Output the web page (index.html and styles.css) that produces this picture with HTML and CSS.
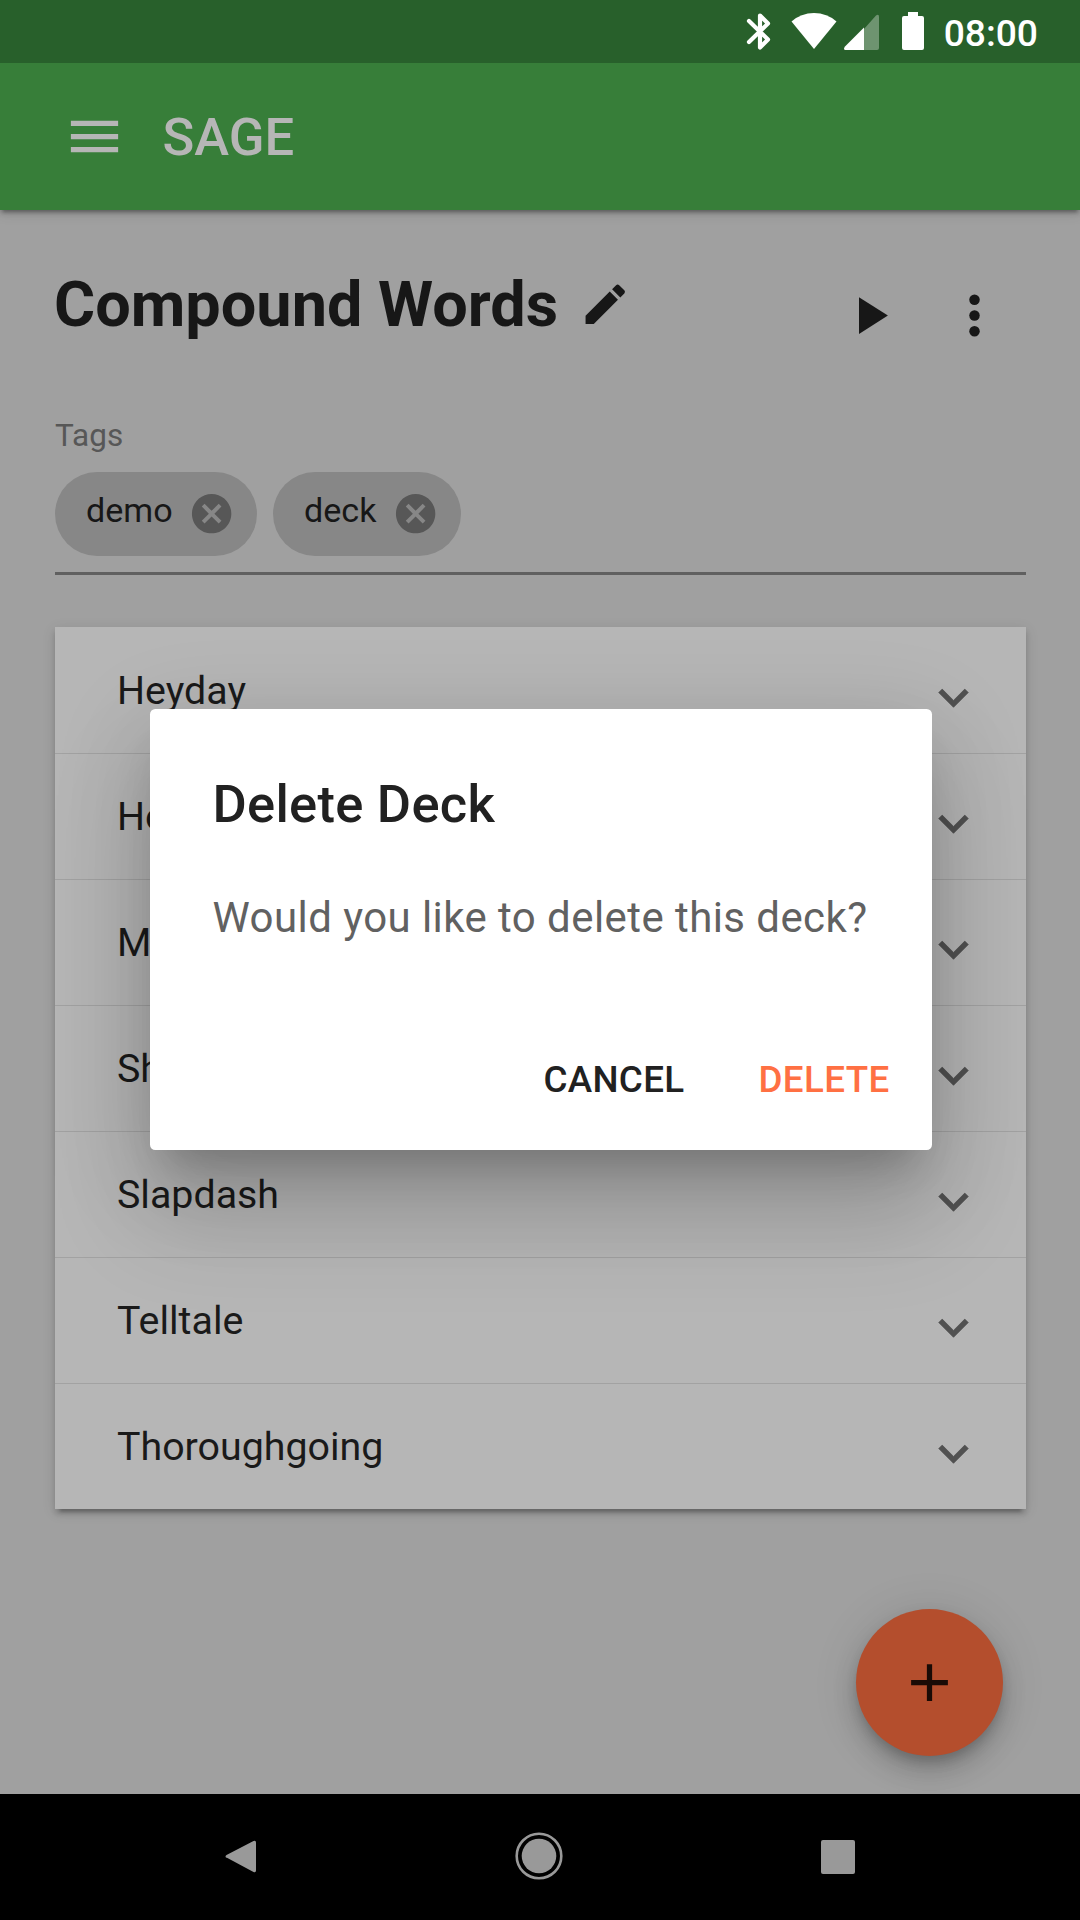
FILE: index.html
```html
<!DOCTYPE html>
<html lang="en">
<head>
<meta charset="utf-8">
<title>Sage</title>
<link rel="stylesheet" href="styles.css">
</head>
<body>
<div class="screen">
  <div class="status-bar">
    <svg class="status-icons" width="190" height="63" viewBox="740 0 190 63">
      <path d="M749 21 L768 39.5 L760 47.5 V15.500 L768 23.500 L749 42" fill="none" stroke="#fff" stroke-width="4.200" stroke-linecap="round" stroke-linejoin="round"/>
      <path d="M814 49 L791.500 21.500 Q801 13 814 13 Q827 13 836.500 21.500 Z" fill="#fff"/>
      <path d="M864 29 L876 15.500 Q879 13.500 879 17 V48 Q879 50 877 50 H864 Z" fill="#fff" fill-opacity=".33"/>
      <path d="M864 27.500 V50 H845 Q843 49 845 46.500 Z" fill="#fff"/>
      <path d="M908 12 H918 V16 H922 Q924 16 924 18 V48 Q924 50 922 50 H904 Q902 50 902 48 V18 Q902 16 904 16 H908 Z" fill="#fff"/>
    </svg>
    <span class="clock">08:00</span>
  </div>

  <header class="app-bar">
    <svg class="icon" viewBox="0 0 24 24"><path d="M3 18h18v-2H3v2zm0-5h18v-2H3v2zm0-7v2h18V6H3z"/></svg>
    <span class="brand">SAGE</span>
  </header>

  <main class="content">
    <div class="deck-header">
      <div class="deck-title">
        <h1>Compound Words</h1>
        <svg class="icon-edit" viewBox="0 0 24 24"><path d="M3 17.25V21h3.750L17.810 9.940l-3.750-3.750L3 17.250zM20.710 7.040c.39-.39.39-1.020 0-1.410l-2.340-2.340a.996.996 0 0 0-1.410 0l-1.830 1.830 3.750 3.750 1.830-1.830z"/></svg>
      </div>
      <div class="deck-actions">
        <svg class="icon" viewBox="0 0 24 24"><path d="M8 5v14l11-7z"/></svg>
        <svg class="icon" viewBox="0 0 24 24"><circle cx="12" cy="6" r="2"/><circle cx="12" cy="12" r="2"/><circle cx="12" cy="18" r="2"/></svg>
      </div>
    </div>

    <section class="tags">
      <div class="tags-label">Tags</div>
      <div class="chips">
        <div class="chip"><span>demo</span><svg class="icon-cancel" viewBox="0 0 24 24"><path d="M12 2C6.470 2 2 6.470 2 12s4.470 10 10 10 10-4.470 10-10S17.530 2 12 2zm5 13.590L15.590 17 12 13.410 8.410 17 7 15.590 10.590 12 7 8.410 8.410 7 12 10.590 15.590 7 17 8.410 13.410 12 17 15.590z"/></svg></div>
        <div class="chip"><span>deck</span><svg class="icon-cancel" viewBox="0 0 24 24"><path d="M12 2C6.470 2 2 6.470 2 12s4.470 10 10 10 10-4.470 10-10S17.530 2 12 2zm5 13.590L15.590 17 12 13.410 8.410 17 7 15.590 10.590 12 7 8.410 8.410 7 12 10.590 15.590 7 17 8.410 13.410 12 17 15.590z"/></svg></div>
      </div>
    </section>

    <div class="cards">
      <div class="row"><span>Heyday</span><svg class="chevron" viewBox="0 0 24 24"><path d="M16.590 8.590L12 13.170 7.410 8.590 6 10l6 6 6-6z"/></svg></div>
      <div class="row"><span>Ho</span><svg class="chevron" viewBox="0 0 24 24"><path d="M16.590 8.590L12 13.170 7.410 8.590 6 10l6 6 6-6z"/></svg></div>
      <div class="row"><span>M</span><svg class="chevron" viewBox="0 0 24 24"><path d="M16.590 8.590L12 13.170 7.410 8.590 6 10l6 6 6-6z"/></svg></div>
      <div class="row"><span>Sh</span><svg class="chevron" viewBox="0 0 24 24"><path d="M16.590 8.590L12 13.170 7.410 8.590 6 10l6 6 6-6z"/></svg></div>
      <div class="row"><span>Slapdash</span><svg class="chevron" viewBox="0 0 24 24"><path d="M16.590 8.590L12 13.170 7.410 8.590 6 10l6 6 6-6z"/></svg></div>
      <div class="row"><span>Telltale</span><svg class="chevron" viewBox="0 0 24 24"><path d="M16.590 8.590L12 13.170 7.410 8.590 6 10l6 6 6-6z"/></svg></div>
      <div class="row"><span>Thoroughgoing</span><svg class="chevron" viewBox="0 0 24 24"><path d="M16.590 8.590L12 13.170 7.410 8.590 6 10l6 6 6-6z"/></svg></div>
    </div>
  </main>

  <div class="fab"><svg class="icon" viewBox="0 0 24 24"><path d="M19 13h-6v6h-2v-6H5v-2h6V5h2v6h6v2z"/></svg></div>

  <div class="dialog">
    <h2>Delete Deck</h2>
    <p>Would you like to delete this deck?</p>
    <div class="dialog-actions">
      <span class="btn cancel">CANCEL</span>
      <span class="btn delete">DELETE</span>
    </div>
  </div>

  <nav class="nav-bar">
    <svg width="48" height="48" viewBox="0 0 48 48"><path d="M9 25 L36 39.500 Q38.500 40.500 38.500 38 V10 Q38.500 7.500 36 8.500 L9 22.500 Q7 24 9 25.500 Z" transform="translate(1.500 .5)"/></svg>
    <svg width="48" height="48" viewBox="0 0 48 48"><circle cx="24" cy="24" r="22.300" fill="none" stroke="#999" stroke-width="2.600"/><circle cx="24" cy="24" r="17.300"/></svg>
    <svg width="48" height="48" viewBox="0 0 48 48"><rect x="7" y="8" width="34" height="34" rx="2"/></svg>
  </nav>
</div>
</body>
</html>
```
FILE: styles.css
```css
* { box-sizing: border-box; }
body { margin: 0; font-family: Roboto, "Liberation Sans", sans-serif; background: #a0a0a0; }
h1, h2, p { margin: 0; }
svg { display: block; flex: none; }

.screen {
  position: relative;
  display: flex;
  flex-direction: column;
  width: 1080px;
  height: 1920px;
  overflow: hidden;
  background: #a0a0a0;
  color: #171717;
}

.status-bar {
  display: flex;
  align-items: center;
  justify-content: flex-end;
  height: 63px;
  padding-right: 42px;
  background: #28602b;
  color: #fff;
  z-index: 2;
}
.clock { margin-left: 14px; font-size: 37.200px; font-weight: 500; line-height: 44px; padding-top: 3px; }

.app-bar {
  display: flex;
  align-items: center;
  gap: 36.500px;
  height: 147px;
  padding-left: 63px;
  background: #377e39;
  color: #b6b6b6;
  box-shadow: 0 5px 3px -3px rgba(0,0,0,.2), 0 3px 5px rgba(0,0,0,.2), 0 3px 13px rgba(0,0,0,.12);
  z-index: 1;
}
.brand { font-size: 52.500px; font-weight: 500; line-height: 62px; }
.icon { width: 63px; height: 63px; fill: currentColor; }

.content { flex: 1; padding: 52px 54px 0 55px; }

.deck-header { display: flex; justify-content: space-between; align-items: center; height: 106px; }
.deck-title { display: flex; align-items: center; gap: 21px; margin-left: -1px; padding-bottom: 21px; }
.deck-title h1 { font-size: 63px; font-weight: 700; line-height: 74px; }
.icon-edit { width: 52.500px; height: 52.500px; fill: currentColor; }
.deck-actions { display: flex; gap: 42px; padding-right: 20px; }

.tags { padding-top: 52px; }
.tags-label { font-size: 31.500px; line-height: 32px; color: #575757; }
.chips {
  display: flex;
  gap: 16px;
  height: 123px;
  padding: 20px 0 16px;
  border-bottom: 3px solid #606060;
}
.chip {
  display: flex;
  align-items: center;
  justify-content: space-between;
  height: 84px;
  padding: 0 21.500px 0 31px;
  border-radius: 42px;
  background: #878787;
  font-size: 34.125px;
}
.chip span { padding-bottom: 8px; margin-right: 15.500px; }
.icon-cancel { width: 47.250px; height: 47.250px; fill: #575757; }

.cards {
  margin-top: 52px;
  background: #b6b6b6;
  box-shadow: 0 8px 3px -5px rgba(0,0,0,.2), 0 5px 5px rgba(0,0,0,.14), 0 3px 13px rgba(0,0,0,.12);
}
.row {
  display: flex;
  align-items: center;
  justify-content: space-between;
  height: 126px;
  padding: 0 43.500px 0 62px;
  font-size: 39.375px;
  color: #1a1a1a;
}
.row + .row { border-top: 1px solid #a2a2a2; }
.chevron { width: 59px; height: 59px; margin-top: 14px; fill: #515151; stroke: #515151; stroke-width: .3px; }

.fab {
  position: absolute;
  left: 855.500px;
  top: 1609px;
  display: grid;
  place-items: center;
  width: 147px;
  height: 147px;
  border-radius: 50%;
  background: #b44e2d;
  color: #1a0b06;
  box-shadow: 0 8px 13px -3px rgba(0,0,0,.2), 0 16px 26px rgba(0,0,0,.14), 0 3px 47px rgba(0,0,0,.12);
}

.dialog {
  position: absolute;
  left: 149.500px;
  top: 708.500px;
  width: 782px;
  height: 441px;
  padding: 63px 21px 0 63px;
  border-radius: 5.250px;
  background: #fff;
  box-shadow: 0 29px 39px -18px rgba(0,0,0,.2), 0 63px 100px 8px rgba(0,0,0,.14), 0 24px 95px 12px rgba(0,0,0,.11);
}
.dialog h2 { font-size: 52.500px; font-weight: 500; line-height: 64px; letter-spacing: .260px; color: #212121; }
.dialog p { padding-top: 50px; font-size: 42px; line-height: 64px; letter-spacing: .430px; color: #616161; white-space: nowrap; }
.dialog-actions { display: flex; justify-content: flex-end; gap: 32px; padding-top: 83px; }
.btn { padding: 0 21px; font-size: 36.750px; font-weight: 500; line-height: 94px; letter-spacing: .350px; }
.cancel { color: #212121; }
.delete { color: #ff7043; }

.nav-bar {
  display: flex;
  align-items: center;
  justify-content: center;
  gap: 251px;
  height: 126px;
  padding-right: 2px;
  padding-bottom: 2px;
  background: #000;
  fill: #999;
  z-index: 1;
}
```
